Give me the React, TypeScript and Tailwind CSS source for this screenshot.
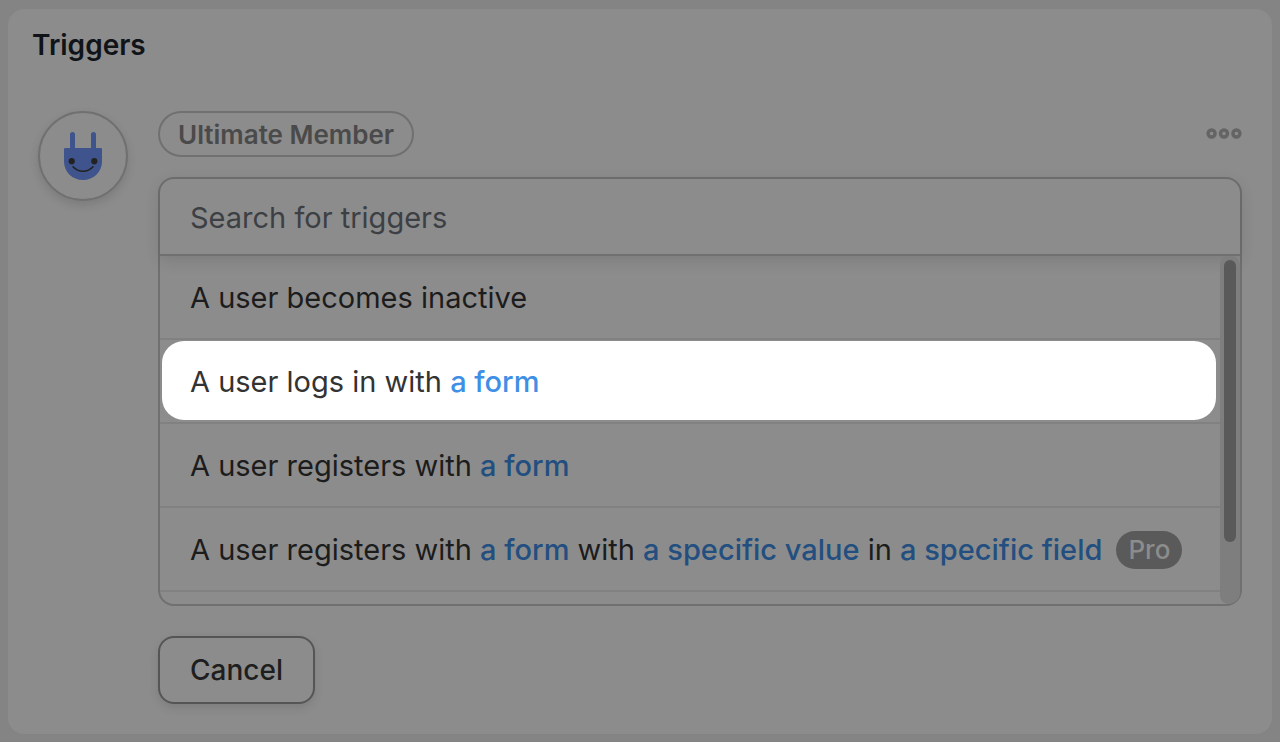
import React from 'react';

interface Part {
  text: string;
  token?: boolean;
}

interface Trigger {
  id: number;
  parts: Part[];
  active?: boolean;
  pro?: boolean;
}

const triggers: Trigger[] = [
  { id: 1, parts: [{ text: 'A user becomes inactive' }] },
  { id: 2, parts: [{ text: 'A user logs in with ' }, { text: 'a form', token: true }], active: true },
  { id: 3, parts: [{ text: 'A user registers with ' }, { text: 'a form', token: true }] },
  {
    id: 4,
    parts: [
      { text: 'A user registers with ' },
      { text: 'a form', token: true },
      { text: ' with ' },
      { text: 'a specific value', token: true },
      { text: ' in ' },
      { text: 'a specific field', token: true },
    ],
    pro: true,
  },
];

function PlugIcon() {
  return (
    <svg width="38" height="48" viewBox="0 0 38 48" fill="none" aria-hidden="true">
      <path
        d="M6 17V2.5a2.5 2.5 0 0 1 5 0V17zM27 17V2.5a2.5 2.5 0 0 1 5 0V17zM1.2 16H36.8A1.2 1.2 0 0 1 38 17.2V29.5C38 40 29.5 48 19 48S0 40 0 29.5V17.2A1.2 1.2 0 0 1 1.2 16z"
        fill="#3f548c"
      />
      <circle cx="7.7" cy="29.2" r="3.1" fill="#222" />
      <circle cx="30.3" cy="29.2" r="3.1" fill="#222" />
      <path d="M9 34.8c5.4 6 14.6 6 20 0" stroke="#222" strokeWidth="1.6" strokeLinecap="round" />
    </svg>
  );
}

function MoreIcon() {
  return (
    <svg width="36" height="12" viewBox="0 0 36 12" fill="none" stroke="#646464" strokeWidth="3.4" aria-hidden="true">
      <circle cx="5.6" cy="5.5" r="3.5" />
      <circle cx="18" cy="5.5" r="3.5" />
      <circle cx="30.4" cy="5.5" r="3.5" />
    </svg>
  );
}

function TriggerRow({ trigger }: { trigger: Trigger }) {
  const { parts, active, pro } = trigger;

  return (
    <li className="border-b-2 border-[#818181]">
      <button
        type="button"
        className={
          active
            ? 'mt-px mr-1 mb-0.5 ml-0.5 flex h-[79px] w-[calc(100%-6px)] items-center rounded-[22px] bg-white px-7 pt-0.5 text-left text-[#333]'
            : 'flex h-[82px] w-full items-center px-[30px] pt-0.5 text-left text-[#1c1c1c]'
        }
      >
        <span className="whitespace-pre">
          {parts.map((part, i) => (
            <span
              key={i}
              className={part.token ? (active ? 'font-medium text-[#3f8fe5]' : 'font-medium text-[#234f80]') : ''}
            >
              {part.text}
            </span>
          ))}
        </span>
        {pro && (
          <span className="ml-3.5 rounded-full bg-[#5a5a5a] px-3 text-[26px] leading-[38px] font-medium text-[#8c8c8c]">
            Pro
          </span>
        )}
      </button>
    </li>
  );
}

export default function App() {
  return (
    <div className="min-h-screen bg-[#848484] px-2 pt-[9px] pb-2 font-[Inter,'Liberation_Sans',sans-serif] text-[28px] leading-9">
      <main className="rounded-2xl bg-[#8c8c8c] pb-[30px]">
        <h1 className="px-6 pt-[18px] font-semibold text-[#101418]">Triggers</h1>

        <section className="flex items-start gap-[30px] px-[30px] pt-12">
          <div className="flex size-[90px] shrink-0 items-center justify-center rounded-full border-2 border-[#707070] shadow-[0_4px_10px_rgba(0,0,0,0.12)]">
            <PlugIcon />
          </div>

          <div className="min-w-0 flex-1">
            <div className="flex items-center justify-between">
              <span className="rounded-full border-2 border-[#707070] px-[18px] pt-0.5 text-[26px] leading-10 font-semibold text-[#4a4a4a]">
                Ultimate Member
              </span>
              <button type="button" aria-label="More options">
                <MoreIcon />
              </button>
            </div>

            <div className="mt-5 rounded-2xl border-2 border-[#707070] text-[29px]">
              <div className="rounded-t-[14px] border-b-2 border-[#707070] shadow-[0_4px_16px_rgba(0,0,0,0.12)]">
                <input
                  type="text"
                  aria-label="Search for triggers"
                  placeholder="Search for triggers"
                  className="block h-[75px] w-full bg-transparent px-[30px] pt-0.5 text-[#3c4044] outline-none placeholder:text-[#3c4044]"
                />
              </div>
              <div className="flex h-[348px]">
                <ul className="min-w-0 flex-1 overflow-hidden">
                  {triggers.map((trigger) => (
                    <TriggerRow key={trigger.id} trigger={trigger} />
                  ))}
                </ul>
                <div className="w-5 rounded-[10px] rounded-br-[14px] bg-[#7e7e7e] p-1">
                  <div className="h-[282px] rounded-full bg-[#595959]" />
                </div>
              </div>
            </div>

            <button
              type="button"
              className="mt-[30px] block rounded-2xl border-2 border-[#555] px-[30px] py-3.5 font-medium text-[#1e1e1e] shadow-[0_4px_10px_rgba(0,0,0,0.1)]"
            >
              Cancel
            </button>
          </div>
        </section>
      </main>
    </div>
  );
}
